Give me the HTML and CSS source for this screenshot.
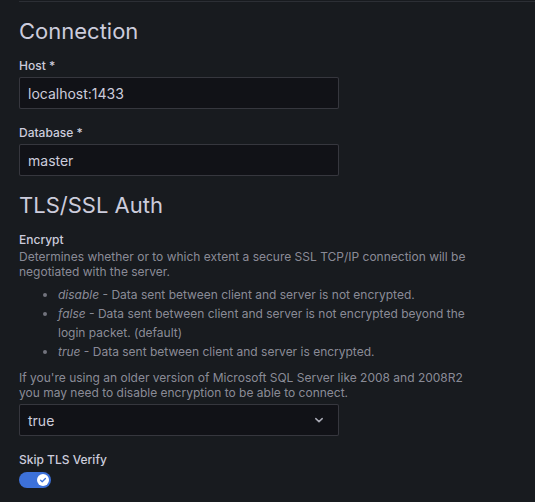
FILE: index.html
```html
<!DOCTYPE html>
<html>
<head>
<meta charset="utf-8">
<link rel="stylesheet" href="styles.css">
</head>
<body>
<div class="page">
  <div class="rule"></div>
  <h3 class="section-title">Connection</h3>
  <div class="field">
    <label class="label">Host *</label>
    <div class="input"><span class="value">localhost:1433</span></div>
  </div>
  <div class="field">
    <label class="label">Database *</label>
    <div class="input"><span class="value">master</span></div>
  </div>
  <h3 class="section-title">TLS/SSL Auth</h3>
  <div class="field">
    <div class="label-block">
      <label class="label">Encrypt</label>
      <div class="desc">Determines whether or to which extent a secure SSL TCP/IP connection will be negotiated with the server.</div>
      <ul class="desc-list">
        <li><em>disable</em> - Data sent between client and server is not encrypted.</li>
        <li><em>false</em> - Data sent between client and server is not encrypted beyond the login packet. (default)</li>
        <li><em>true</em> - Data sent between client and server is encrypted.</li>
      </ul>
      <div class="desc desc-after">If you're using an older version of Microsoft SQL Server like 2008 and 2008R2 you may need to disable encryption to be able to connect.</div>
    </div>
    <div class="input select">
      <span class="value">true</span>
      <svg class="chevron" width="16" height="16" viewBox="0 0 16 16"><path d="M4.8 6.6 L8 9.6 L11.2 6.6" fill="none" stroke="#a9aab5" stroke-width="1.5" stroke-linecap="round" stroke-linejoin="round"/></svg>
    </div>
  </div>
  <div class="field">
    <label class="label">Skip TLS Verify</label>
    <div class="switch">
      <div class="knob">
        <svg width="12" height="12" viewBox="0 0 12 12"><path d="M3.6 6.2 L5.2 7.7 L8.4 4.5" fill="none" stroke="#3d71d9" stroke-width="1.3" stroke-linecap="round" stroke-linejoin="round"/></svg>
      </div>
    </div>
  </div>
</div>
</body>
</html>
```
FILE: styles.css
```css
html, body {
  margin: 0;
  padding: 0;
  background: #181b1f;
}
body {
  font-family: Inter, "Noto Sans", sans-serif;
  color: #ccccdc;
  font-size: 14px;
}
.page {
  padding-left: 19px;
}
.rule {
  margin-top: 1px;
  height: 1px;
  background: #2c2f35;
}
.section-title {
  margin: 16px 0 14px;
  font-size: 22px;
  line-height: 26px;
  font-weight: 400;
  color: #ccccdc;
}
.field {
  margin-bottom: 16px;
  width: 320px;
}
.label {
  display: block;
  font-size: 12px;
  line-height: 15px;
  font-weight: 500;
  color: #ccccdc;
  margin-bottom: 4px;
}
.label-block .label {
  margin-bottom: 2px;
}
.label-block {
  margin-bottom: 4px;
}
.desc {
  font-size: 12px;
  line-height: 15px;
  color: rgba(204, 204, 220, 0.65);
  width: 452px;
}
.desc-list {
  margin: 7px 0 9px;
  padding-left: 39px;
  font-size: 12px;
  line-height: 18.86px;
  color: rgba(204, 204, 220, 0.65);
  width: 413px;
}
.desc-list li::marker {
  color: rgba(204, 204, 220, 0.5);
}
.input {
  box-sizing: border-box;
  height: 32px;
  width: 320px;
  background: #111217;
  border: 1px solid rgba(204, 204, 220, 0.2);
  border-radius: 2px;
  display: flex;
  align-items: center;
  padding: 0 8px;
}
.value {
  font-size: 14px;
  color: #ccccdc;
  flex: 1;
}
.chevron {
  margin-right: 3px;
}
.switch {
  width: 32px;
  height: 16px;
  border-radius: 8px;
  background: #3d71d9;
  display: flex;
  align-items: center;
  justify-content: flex-end;
  padding-right: 2px;
  box-sizing: border-box;
  margin-top: 5px;
}
.knob {
  width: 12px;
  height: 12px;
  border-radius: 50%;
  background: #ffffff;
  display: flex;
}
```
